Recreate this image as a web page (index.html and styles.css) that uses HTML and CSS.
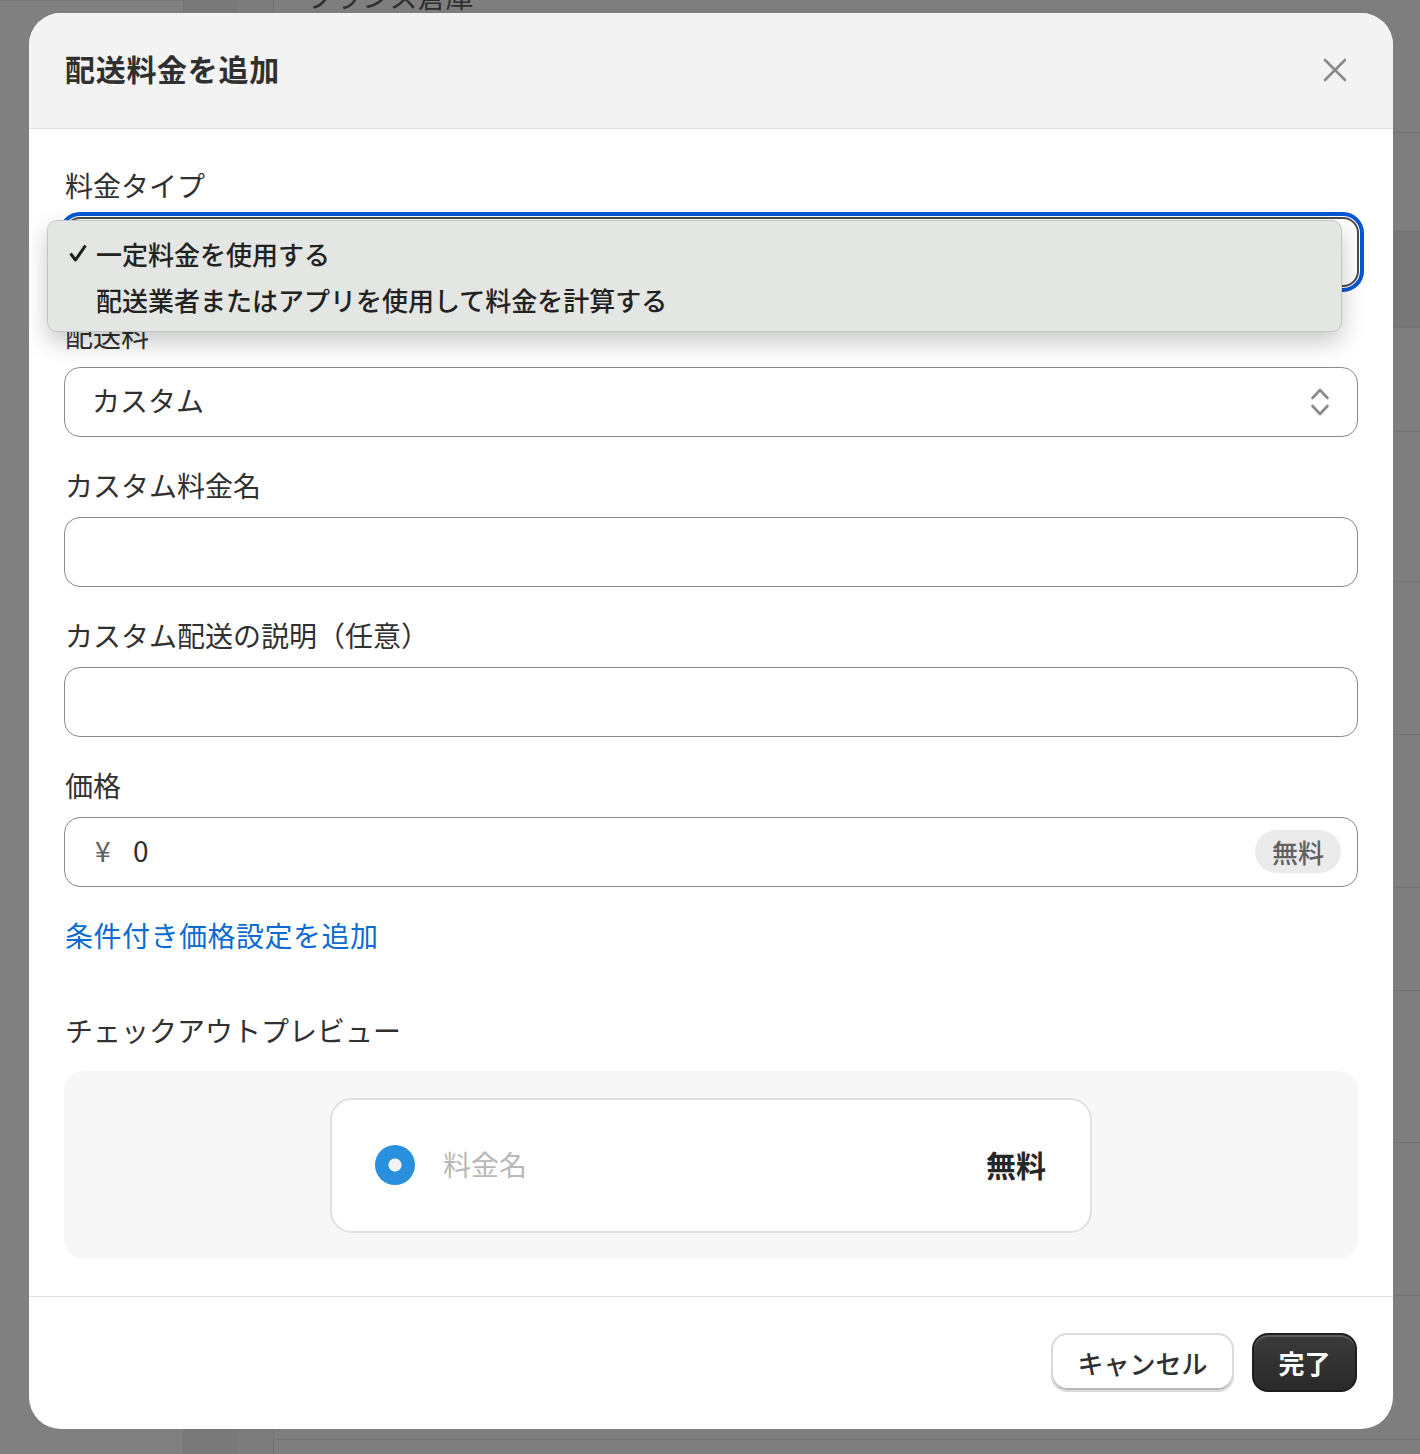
FILE: index.html
```html
<!DOCTYPE html>
<html lang="ja">
<head>
    <meta charset="UTF-8">
    <meta name="viewport" content="width=device-width, initial-scale=1.0">
    <title>配送料金を追加</title>
    <link rel="stylesheet" href="styles.css">
</head>
<body>
    <!-- Página de fundo (escurecida pelo overlay) -->
    <div class="page">
        <div class="rail rail-a"></div>
        <div class="rail rail-b"></div>
        <div class="rail rail-c"></div>
        <main class="page-main">
            <div class="page-row" style="height: 133px"><span class="page-text">フランス倉庫</span></div>
            <div class="page-row" style="height: 99px"></div>
            <div class="page-row page-row-dark" style="height: 96px"></div>
            <div class="page-row" style="height: 104px"></div>
            <div class="page-row" style="height: 150px"></div>
            <div class="page-row" style="height: 153px"></div>
            <div class="page-row" style="height: 153px"></div>
            <div class="page-row" style="height: 103px"></div>
            <div class="page-row" style="height: 152px"></div>
            <div class="page-row" style="height: 153px"></div>
            <div class="page-row" style="height: 144px"></div>
        </main>
    </div>

    <div class="overlay">
        <div class="modal">
            <div class="modal-header">
                <h2 class="modal-title">配送料金を追加</h2>
                <button class="close-btn" aria-label="閉じる">
                    <svg width="24" height="24" viewBox="0 0 24 24">
                        <path d="M2 2 L22 22 M22 2 L2 22" stroke="#8a8a8a" stroke-width="2.6" stroke-linecap="round" fill="none"/>
                    </svg>
                </button>
            </div>

            <div class="modal-body">
                <div class="field field-menu">
                    <label class="field-label">料金タイプ</label>
                    <div class="box box-focused"></div>
                    <!-- Menu nativo aberto -->
                    <ul class="menu">
                        <li class="menu-item">
                            <span class="menu-check">
                                <svg width="20" height="20" viewBox="0 0 20 20">
                                    <path d="M2.5 10.5 L7.5 17 L17.5 2.5" stroke="#1e1e1e" stroke-width="3" fill="none" stroke-linejoin="round"/>
                                </svg>
                            </span>
                            一定料金を使用する
                        </li>
                        <li class="menu-item">
                            <span class="menu-check"></span>
                            配送業者またはアプリを使用して料金を計算する
                        </li>
                    </ul>
                </div>

                <div class="field">
                    <label class="field-label">配送料</label>
                    <div class="box box-select">
                        <span class="box-text">カスタム</span>
                        <svg class="chevron" width="20" height="30" viewBox="0 0 20 30">
                            <path d="M2.5 11 L10 3 L17.5 11 M2.5 19 L10 27 L17.5 19" stroke="#8a8a8a" stroke-width="2.6" stroke-linecap="round" stroke-linejoin="round" fill="none"/>
                        </svg>
                    </div>
                </div>

                <div class="field">
                    <label class="field-label">カスタム料金名</label>
                    <div class="box"></div>
                </div>

                <div class="field">
                    <label class="field-label">カスタム配送の説明（任意）</label>
                    <div class="box"></div>
                </div>

                <div class="field">
                    <label class="field-label">価格</label>
                    <div class="box box-price">
                        <span class="price-prefix">¥</span>
                        <span class="price-value">0</span>
                        <span class="price-badge">無料</span>
                    </div>
                </div>

                <a class="link" href="#">条件付き価格設定を追加</a>

                <div class="preview-label">チェックアウトプレビュー</div>
                <div class="preview">
                    <div class="preview-card">
                        <span class="radio"></span>
                        <span class="preview-name">料金名</span>
                        <span class="preview-price">無料</span>
                    </div>
                </div>
            </div>

            <div class="modal-footer">
                <button class="btn btn-secondary">キャンセル</button>
                <button class="btn btn-primary">完了</button>
            </div>
        </div>
    </div>
</body>
</html>
```

FILE: styles.css
```css
* {
    margin: 0;
    padding: 0;
    box-sizing: border-box;
}

body {
    width: 1420px;
    height: 1454px;
    overflow: hidden;
    background: #7e7e7e;
    font-family: "Noto Sans CJK JP", "Noto Sans", sans-serif;
    color: #303030;
    position: relative;
}

/* Fundo */
.page {
    display: flex;
    height: 100%;
}

.rail {
    height: 100%;
    border-right: 1px solid #747474;
}

.rail-a {
    width: 184px;
    background: #808080;
    border-top: 1px solid #777;
}

.rail-b {
    width: 52px;
    background: #787878;
}

.rail-c {
    width: 38px;
    background: #7c7c7c;
}

.page-main {
    flex: 1;
    display: flex;
    flex-direction: column;
}

.page-row {
    flex-shrink: 0;
    border-bottom: 1px solid #717171;
    padding-left: 32px;
}

.page-row-dark {
    background: #777;
}

.page-text {
    display: block;
    margin-top: -22px;
    font-size: 28px;
    line-height: 36px;
    color: #2e2e2e;
}

/* Modal */
.overlay {
    position: absolute;
    inset: 0;
    padding: 13px 0 0 29px;
}

.modal {
    width: 1364px;
    background: #fff;
    border-radius: 32px;
    overflow: hidden;
}

.modal-header {
    height: 116px;
    background: #f3f3f3;
    border-bottom: 1px solid #e1e1e1;
    display: flex;
    align-items: center;
    justify-content: space-between;
    padding: 0 46px 0 36px;
}

.modal-title {
    font-size: 30px;
    font-weight: 700;
    line-height: 40px;
    letter-spacing: 0.7px;
    color: #303030;
    margin-top: -5px;
}

.close-btn {
    border: none;
    background: none;
    width: 24px;
    height: 24px;
    display: flex;
    margin-top: -2px;
}

.modal-body {
    padding: 38px 35px 37px 35px;
    display: flex;
    flex-direction: column;
}

.field {
    display: flex;
    flex-direction: column;
    margin-bottom: 30px;
}

.field-menu {
    position: relative;
}

.field-label {
    font-size: 28px;
    line-height: 36px;
    margin-bottom: 14px;
    padding-left: 1px;
}

.box {
    height: 70px;
    border: 1px solid #8a8a8a;
    border-radius: 16px;
    display: flex;
    align-items: center;
    padding: 0 27px 0 27px;
}

.box-text {
    font-size: 28px;
    margin-top: -5px;
}

.box-focused {
    border: 2px solid #4a4a4a;
    outline: 4px solid #0058d4;
    outline-offset: 1px;
    width: 1295px;
}

.box-select {
    justify-content: space-between;
}

.chevron {
    display: block;
}

/* Menu aberto */
.menu {
    position: absolute;
    left: -17px;
    top: 53px;
    width: 1295px;
    height: 112px;
    list-style: none;
    background: #e3e6e3;
    border: 1px solid #c4c6c4;
    border-radius: 10px;
    box-shadow: 0 10px 24px rgba(0, 0, 0, 0.22);
    padding: 9px 0 0 20px;
    z-index: 5;
}

.menu-item {
    height: 46px;
    display: flex;
    align-items: center;
    font-size: 26px;
    font-weight: 500;
    color: #222;
}

.menu-check {
    width: 28px;
    display: flex;
}

/* Preço */
.box-price {
    padding: 0 16px 0 30px;
}

.price-prefix {
    font-size: 28px;
    color: #616161;
    width: 38px;
    margin-top: -5px;
}

.price-value {
    font-size: 28px;
    color: #303030;
    flex: 1;
    margin-top: -5px;
}

.price-badge {
    height: 43px;
    padding: 0 17px;
    border-radius: 22px;
    background: #ebebeb;
    color: #616161;
    font-size: 26px;
    font-weight: 500;
    display: flex;
    align-items: center;
    margin-top: -2px;
}

.link {
    font-size: 28px;
    line-height: 36px;
    letter-spacing: 0.5px;
    color: #0b6bd0;
    text-decoration: none;
    padding-left: 1px;
    align-self: flex-start;
}

.preview-label {
    font-size: 28px;
    line-height: 36px;
    margin-top: 59px;
    margin-bottom: 23px;
    padding-left: 1px;
}

.preview {
    height: 188px;
    background: #f7f7f7;
    border-radius: 20px;
    display: flex;
    justify-content: center;
    align-items: center;
}

.preview-card {
    width: 762px;
    height: 135px;
    background: #fff;
    border: 2px solid #e0e0e0;
    border-radius: 22px;
    display: flex;
    align-items: center;
    padding: 0 44px 0 43px;
}

.radio {
    width: 40px;
    height: 40px;
    border-radius: 50%;
    background: radial-gradient(circle, #f2f2f2 0 6px, #2a90de 7px);
    margin-right: 28px;
}

.preview-name {
    flex: 1;
    font-size: 28px;
    color: #b8b8b8;
    margin-top: -3px;
}

.preview-price {
    font-size: 30px;
    font-weight: 700;
    color: #262626;
    margin-top: -3px;
}

/* Rodapé */
.modal-footer {
    border-top: 1px solid #e1e1e1;
    padding: 36px 36px 37px;
    display: flex;
    justify-content: flex-end;
    gap: 18px;
}

.btn {
    height: 59px;
    border-radius: 16px;
    font-family: inherit;
    font-size: 26px;
    padding: 0;
    white-space: nowrap;
    line-height: 1;
    cursor: pointer;
}

.btn-secondary {
    width: 183px;
    background: #fff;
    color: #303030;
    font-weight: 500;
    border: 2px solid #dadada;
    box-shadow: inset 0 -2px 0 #b8b8b8;
}

.btn-primary {
    width: 105px;
    background: linear-gradient(#3a3a3a, #2a2a2a);
    color: #fff;
    font-weight: 700;
    border: 2px solid #1e1e1e;
    box-shadow: inset 0 2px 0 rgba(255, 255, 255, 0.18);
}
```
